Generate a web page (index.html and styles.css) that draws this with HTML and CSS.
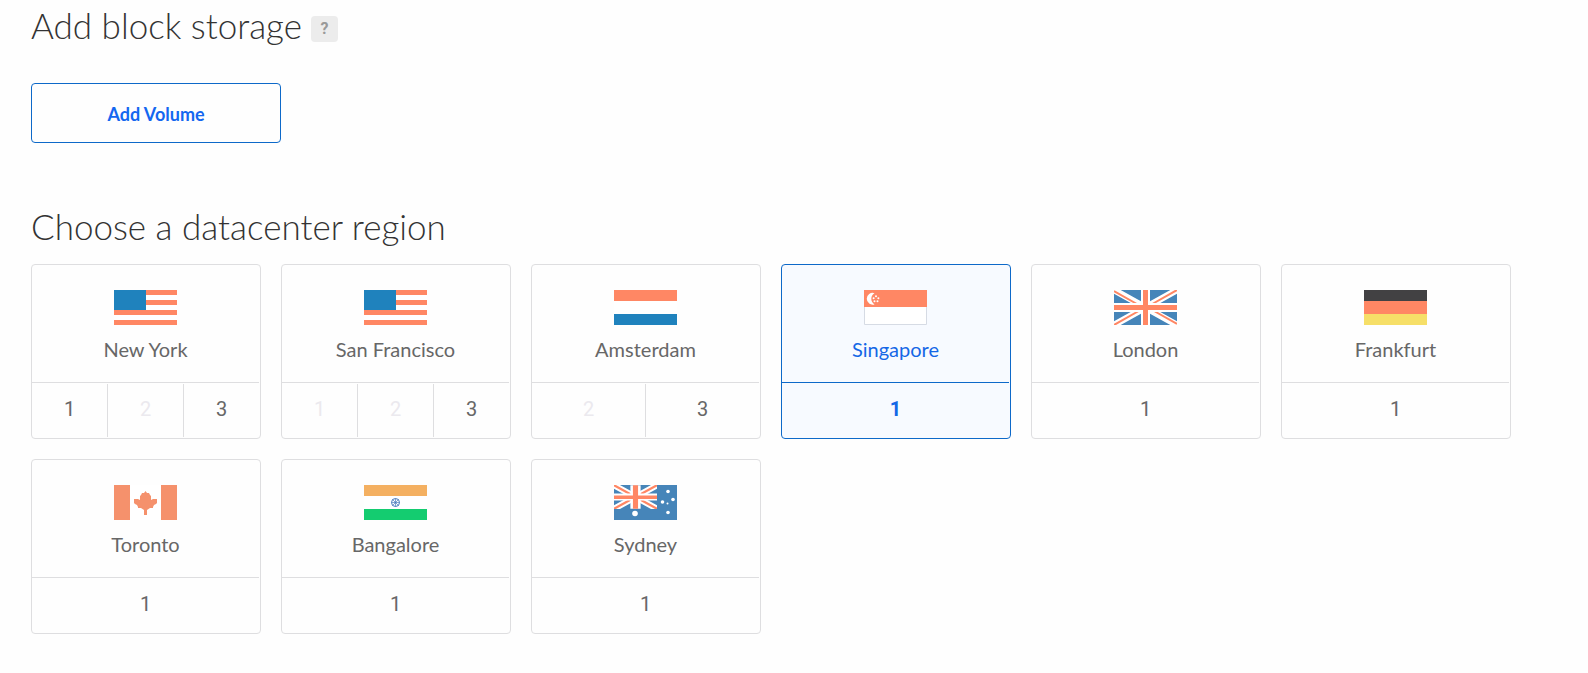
FILE: index.html
```html
<!DOCTYPE html>
<html lang="en">
<head>
<meta charset="utf-8">
<meta name="viewport" content="width=device-width, initial-scale=1">
<title>Create Droplet</title>
<link rel="stylesheet" href="styles.css">
</head>
<body>
<svg class="defs" width="0" height="0" aria-hidden="true">
  <defs>
    <symbol id="flag-us" viewBox="0 0 63 35">
      <path fill="#fff" d="M0 0h63v35H0z"/>
      <path fill="#ff8764" d="M0 0h63v5H0zM0 10h63v5H0zM0 20h63v5H0zM0 30h63v5H0z"/>
      <path fill="#1f82bd" d="M0 0h32v20H0z"/>
    </symbol>
    <symbol id="flag-nl" viewBox="0 0 63 35">
      <path fill="#fff" d="M0 0h63v35H0z"/>
      <path fill="#ff8764" d="M0 0h63v11H0z"/>
      <path fill="#1f82bd" d="M0 24h63v11H0z"/>
    </symbol>
    <symbol id="flag-sg" viewBox="0 0 63 35">
      <path fill="#fff" stroke="#d6dbe4" d="M.5.5h62v34H.5z"/>
      <path fill="#ff8764" d="M0 0h63v17H0z"/>
      <path fill="#fff" d="M10.500 3.200a5.900 5.900 0 1 0 0 11.200a6.500 6.500 0 0 1 0-11.200z"/>
      <g fill="#fff"><circle cx="12" cy="6.300" r="1"/><circle cx="9.600" cy="8.200" r="1"/><circle cx="14.400" cy="8.200" r="1"/><circle cx="10.500" cy="11.200" r="1"/><circle cx="13.500" cy="11.200" r="1"/></g>
    </symbol>
    <symbol id="flag-gb" viewBox="0 0 63 35">
      <path fill="#4685b9" d="M0 0h63v35H0z"/>
      <path stroke="#fff" stroke-width="6.500" d="M0 0l63 35M63 0L0 35"/>
      <path stroke="#ff8764" stroke-width="2" d="M0 1l30 17M63 0L33 17M63 34L33 17M0 35l30-17"/>
      <path fill="#fff" d="M27 0h9v35h-9zM0 13h63v9H0z"/>
      <path fill="#ff8764" d="M29 0h5v35h-5zM0 15h63v5H0z"/>
    </symbol>
    <symbol id="flag-de" viewBox="0 0 63 35">
      <path fill="#424143" d="M0 0h63v11H0z"/>
      <path fill="#ff8764" d="M0 11h63v13H0z"/>
      <path fill="#f6df68" d="M0 24h63v11H0z"/>
    </symbol>
    <symbol id="flag-ca" viewBox="0 0 63 35">
      <path fill="#fff" d="M0 0h63v35H0z"/>
      <path fill="#f5916c" d="M0 0h16v35H0zM47 0h16v35H47zM31.500 6l1.500 2h2l1 2 1 1v4l2-1h4v4l-1 1-2 1-1 2v1h-3l-3 2v5h-3v-5l-3-2h-3v-1l-1-2-2-1-1-1v-4h4l2 1v-4l1-1 1-2h2z"/>
    </symbol>
    <symbol id="flag-in" viewBox="0 0 63 35">
      <path fill="#fff" d="M0 0h63v35H0z"/>
      <path fill="#f4b061" d="M0 0h63v11H0z"/>
      <path fill="#14cc70" d="M0 24h63v11H0z"/>
      <g fill="none" stroke="#4779bd"><circle cx="31.500" cy="17.500" r="4"/><path stroke-width=".7" d="M31.500 13.500v8M27.500 17.500h8M28.700 14.700l5.600 5.600M34.300 14.700l-5.600 5.600"/></g>
    </symbol>
    <symbol id="flag-au" viewBox="0 0 63 35">
      <path fill="#4685b9" d="M0 0h63v35H0z"/>
      <svg width="43" height="24" viewBox="0 0 42 23">
        <path stroke="#fff" stroke-width="6" d="M0 0l42 23M42 0L0 23"/>
        <path stroke="#ff8764" stroke-width="2.200" d="M0 0l42 23M42 0L0 23"/>
        <path fill="#fff" d="M16 0h10v23H16zM0 8h42v7H0z"/>
        <path fill="#ff8764" d="M18.500 0h5v23h-5zM0 10h42v3.500H0z"/>
      </svg>
      <g fill="#fff"><circle cx="21" cy="28.500" r="2.800"/><circle cx="54" cy="6.500" r="1.800"/><circle cx="48.500" cy="17" r="1.800"/><circle cx="59" cy="14.500" r="1.800"/><circle cx="54" cy="27.500" r="1.800"/><circle cx="53.500" cy="18.500" r="1"/></g>
    </symbol>
  </defs>
</svg>
<main class="page">
  <section class="section">
    <h2 class="heading">Add block storage <button class="help" type="button" aria-label="Help">?</button></h2>
    <button class="add-volume" type="button">Add Volume</button>
  </section>
  <section class="section">
    <h2 class="heading" id="region-title">Choose a datacenter region</h2>
    <div class="regions" role="radiogroup" aria-labelledby="region-title">
      <article class="region">
        <div class="place"><svg class="flag" aria-hidden="true"><use href="#flag-us"/></svg><h3 class="name">New York</h3></div>
        <div class="centers">
          <label class="center"><input type="radio" name="region" value="nyc1">1</label>
          <label class="center"><input type="radio" name="region" value="nyc2" disabled>2</label>
          <label class="center"><input type="radio" name="region" value="nyc3">3</label>
        </div>
      </article>
      <article class="region">
        <div class="place"><svg class="flag" aria-hidden="true"><use href="#flag-us"/></svg><h3 class="name">San Francisco</h3></div>
        <div class="centers">
          <label class="center"><input type="radio" name="region" value="sfo1" disabled>1</label>
          <label class="center"><input type="radio" name="region" value="sfo2" disabled>2</label>
          <label class="center"><input type="radio" name="region" value="sfo3">3</label>
        </div>
      </article>
      <article class="region">
        <div class="place"><svg class="flag" aria-hidden="true"><use href="#flag-nl"/></svg><h3 class="name">Amsterdam</h3></div>
        <div class="centers">
          <label class="center"><input type="radio" name="region" value="ams2" disabled>2</label>
          <label class="center"><input type="radio" name="region" value="ams3">3</label>
        </div>
      </article>
      <article class="region">
        <div class="place"><svg class="flag" aria-hidden="true"><use href="#flag-sg"/></svg><h3 class="name">Singapore</h3></div>
        <div class="centers">
          <label class="center"><input type="radio" name="region" value="sgp1" checked>1</label>
        </div>
      </article>
      <article class="region">
        <div class="place"><svg class="flag" aria-hidden="true"><use href="#flag-gb"/></svg><h3 class="name">London</h3></div>
        <div class="centers">
          <label class="center"><input type="radio" name="region" value="lon1">1</label>
        </div>
      </article>
      <article class="region">
        <div class="place"><svg class="flag" aria-hidden="true"><use href="#flag-de"/></svg><h3 class="name">Frankfurt</h3></div>
        <div class="centers">
          <label class="center"><input type="radio" name="region" value="fra1">1</label>
        </div>
      </article>
      <article class="region">
        <div class="place"><svg class="flag" aria-hidden="true"><use href="#flag-ca"/></svg><h3 class="name">Toronto</h3></div>
        <div class="centers">
          <label class="center"><input type="radio" name="region" value="tor1">1</label>
        </div>
      </article>
      <article class="region">
        <div class="place"><svg class="flag" aria-hidden="true"><use href="#flag-in"/></svg><h3 class="name">Bangalore</h3></div>
        <div class="centers">
          <label class="center"><input type="radio" name="region" value="blr1">1</label>
        </div>
      </article>
      <article class="region">
        <div class="place"><svg class="flag" aria-hidden="true"><use href="#flag-au"/></svg><h3 class="name">Sydney</h3></div>
        <div class="centers">
          <label class="center"><input type="radio" name="region" value="syd1">1</label>
        </div>
      </article>
    </div>
  </section>
</main>
</body>
</html>
```
FILE: styles.css
```css
* { box-sizing: border-box; }

body {
  margin: 0;
  background: #fefefe;
  color: #676767;
  font-family: Lato, "Open Sans", sans-serif;
  font-size: 20px;
}

.defs { position: absolute; }

.page {
  display: flex;
  flex-direction: column;
  gap: 63px;
  padding: 5px 31px 36px;
}

.heading {
  display: flex;
  align-items: flex-end;
  gap: 9px;
  margin: 0 0 18px;
  color: #333;
  font-size: 35px;
  font-weight: 300;
  line-height: 40px;
}

.help {
  width: 27px;
  height: 26px;
  margin-bottom: 3px;
  padding: 0;
  border: 0;
  border-radius: 4px;
  background: #ececec;
  color: #999;
  font: 700 16px/26px Roboto, sans-serif;
}

.add-volume {
  display: block;
  width: 250px;
  height: 60px;
  margin-top: 38px;
  padding: 2px 0 0;
  border: 1px solid #0d69c9;
  border-radius: 4px;
  background: #fefefe;
  color: #1467f0;
  font: 700 18px/24px Lato, sans-serif;
}

.regions {
  display: grid;
  grid-template-columns: repeat(auto-fill, 230px);
  gap: 20px;
}

.region {
  overflow: hidden;
  border: 1px solid #dedee0;
  border-radius: 4px;
}

.place {
  display: flex;
  flex-direction: column;
  align-items: center;
  gap: 12px;
  margin-right: 1px;
  padding: 25px 0 21px;
  border-bottom: 1px solid #dedee0;
}

.flag {
  width: 63px;
  height: 35px;
}

.name {
  margin: 0;
  font-size: 20px;
  font-weight: 400;
  line-height: 24px;
}

.centers {
  display: flex;
  margin-right: 1px;
  padding: 1px 0;
}

.center {
  flex: 1;
  padding: 13px 0 16px;
  font-family: Roboto, sans-serif;
  line-height: 24px;
  text-align: center;
  cursor: pointer;
}

.center + .center { border-left: 1px solid #dedee0; }

.center input {
  position: absolute;
  opacity: 0;
  pointer-events: none;
}

.center:has(:disabled) {
  color: #ebe9ee;
  cursor: default;
}

.region:has(:checked) {
  border-color: #0d69c9;
  background: #f7faff;
  color: #1467e6;
}

.region:has(:checked) .place { border-color: #0d69c9; }

.center:has(:checked) { font-weight: 700; }
```
